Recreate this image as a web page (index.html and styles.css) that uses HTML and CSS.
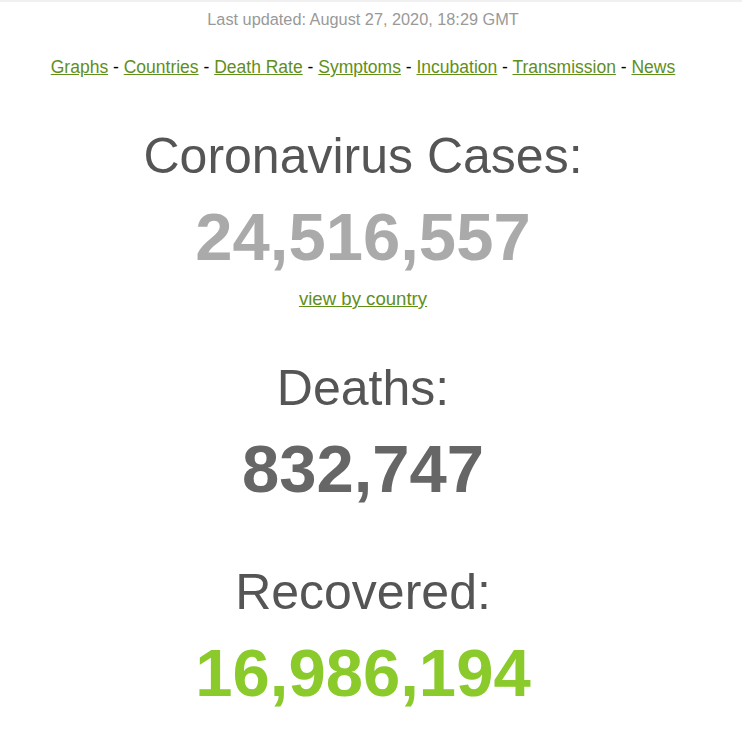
FILE: index.html
```html
<!DOCTYPE html>
<html lang="en">
<head>
<meta charset="utf-8">
<title>Coronavirus Cases</title>
<link rel="stylesheet" href="styles.css">
</head>
<body>
<div class="topbar"></div>
<main class="page">
  <div class="updated">Last updated: August 27, 2020, 18:29 GMT</div>
  <nav class="links">
    <a href="#">Graphs</a> - <a href="#">Countries</a> - <a href="#">Death Rate</a> - <a href="#">Symptoms</a> - <a href="#">Incubation</a> - <a href="#">Transmission</a> - <a href="#">News</a>
  </nav>
  <section class="counter counter-cases">
    <h1 class="counter-title">Coronavirus Cases:</h1>
    <div class="counter-number num-cases">24,516,557</div>
    <a class="view-link" href="#">view by country</a>
  </section>
  <section class="counter counter-deaths">
    <h1 class="counter-title">Deaths:</h1>
    <div class="counter-number num-deaths">832,747</div>
  </section>
  <section class="counter counter-recovered">
    <h1 class="counter-title">Recovered:</h1>
    <div class="counter-number num-recovered">16,986,194</div>
  </section>
</main>
</body>
</html>
```
FILE: styles.css
```css
html, body {
  margin: 0;
  padding: 0;
  background: #ffffff;
}
body {
  font-family: "Liberation Sans", Arial, Helvetica, sans-serif;
  color: #555555;
}
.topbar {
  height: 2px;
  background: #f0f0f0;
}
.page {
  width: 726px;
  display: flex;
  flex-direction: column;
  align-items: center;
  text-align: center;
}
.updated {
  margin-top: 7px;
  font-size: 16.3px;
  line-height: 20px;
  color: #999999;
}
.links {
  margin-top: 27px;
  font-size: 17.5px;
  line-height: 22px;
  color: #000000;
}
.links a, .view-link {
  color: #5f8f1a;
  text-decoration: underline;
}
.counter {
  display: flex;
  flex-direction: column;
  align-items: center;
}
.counter-title {
  margin: 0;
  font-size: 50px;
  line-height: 56px;
  font-weight: normal;
  color: #555555;
}
.counter-number {
  margin-top: 17px;
  font-size: 67px;
  line-height: 72px;
  font-weight: bold;
}
.counter-cases { margin-top: 50px; }
.counter-deaths { margin-top: 50px; }
.counter-recovered { margin-top: 59px; }
.num-cases { color: #aaaaaa; }
.num-deaths { color: #666666; }
.num-recovered { color: #8aca2b; }
.view-link {
  margin-top: 15px;
  font-size: 18.6px;
  line-height: 22px;
}
```
